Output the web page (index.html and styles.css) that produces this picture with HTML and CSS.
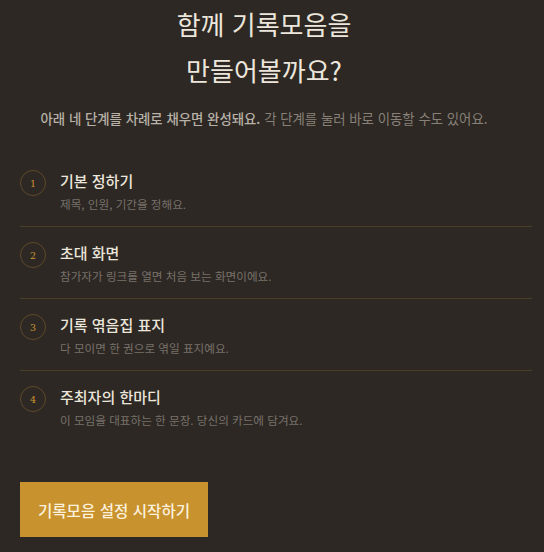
FILE: index.html
```html
<!DOCTYPE html>
<html lang="ko">
  <head>
    <meta charset="UTF-8" />
    <meta name="viewport" content="width=device-width, initial-scale=1.0" />
    <title>기록모음 만들기</title>
    <link rel="stylesheet" href="styles.css">
  </head>
  <body>
    <div class="intro">
      <h1>함께 기록모음을<br>만들어볼까요?</h1>
      <p class="lead">
        <strong>아래 네 단계를 차례로 채우면 완성돼요.</strong> 각 단계를 눌러 바로 이동할 수도 있어요.
      </p>
    </div>

    <ol class="steps">
      <li class="step">
        <span class="step-num">1</span>
        <div class="step-body">
          <div class="step-title">기본 정하기</div>
          <div class="step-desc">제목, 인원, 기간을 정해요.</div>
        </div>
      </li>
      <li class="step">
        <span class="step-num">2</span>
        <div class="step-body">
          <div class="step-title">초대 화면</div>
          <div class="step-desc">참가자가 링크를 열면 처음 보는 화면이에요.</div>
        </div>
      </li>
      <li class="step">
        <span class="step-num">3</span>
        <div class="step-body">
          <div class="step-title">기록 엮음집 표지</div>
          <div class="step-desc">다 모이면 한 권으로 엮일 표지예요.</div>
        </div>
      </li>
      <li class="step">
        <span class="step-num">4</span>
        <div class="step-body">
          <div class="step-title">주최자의 한마디</div>
          <div class="step-desc">이 모임을 대표하는 한 문장. 당신의 카드에 담겨요.</div>
        </div>
      </li>
    </ol>

    <button class="start-btn">기록모음 설정 시작하기</button>
  </body>
</html>
```

FILE: styles.css
```css
body {
  margin: 0;
  padding: 1px 12px 0 20px;
  background-color: #2d2824;
  font-family: "Noto Sans CJK KR", "Noto Sans", sans-serif;
  color: #ece6dc;
}

.intro {
  text-align: center;
  padding-right: 24px;
}

h1 {
  margin: 0;
  font-size: 26px;
  font-weight: 400;
  line-height: 46px;
  color: #ece6dc;
}

.lead {
  margin: 15px 0 0;
  font-size: 13.4px;
  line-height: 20px;
  color: #888178;
}

.lead strong {
  font-weight: 500;
  color: #b8b1a7;
}

.steps {
  list-style: none;
  margin: 27px 0 0;
  padding: 0;
}

.step {
  display: flex;
  align-items: flex-start;
  gap: 14px;
  padding: 15px 0 13px;
  border-bottom: 1px solid #4a3e2b;
}

.step:last-child {
  border-bottom: none;
}

.step-num {
  flex: none;
  width: 24px;
  height: 24px;
  border: 1px solid #5e4a2b;
  border-radius: 50%;
  display: flex;
  align-items: center;
  justify-content: center;
  font-family: "DejaVu Serif", "Liberation Serif", serif;
  font-size: 9.5px;
  color: #cc9530;
}

.step-title {
  font-size: 15px;
  font-weight: 500;
  line-height: 22px;
  color: #ebe5db;
}

.step-desc {
  margin-top: 3px;
  font-size: 11.6px;
  line-height: 18px;
  color: #77716a;
}

.start-btn {
  display: block;
  margin-top: 40px;
  width: 188px;
  height: 55px;
  border: none;
  background-color: #c8922e;
  color: #fbf1dd;
  font-family: "Noto Sans CJK KR", "Noto Sans", sans-serif;
  font-size: 15.6px;
  font-weight: 500;
  cursor: pointer;
}
```
